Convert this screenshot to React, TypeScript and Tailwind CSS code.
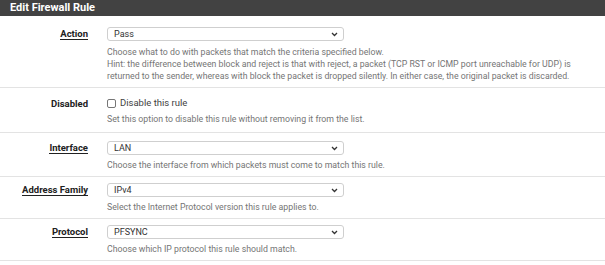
import React from "react";

const font = { fontFamily: "Roboto, 'Noto Sans', sans-serif" };

function Chevron() {
  return (
    <svg width="7" height="5" viewBox="0 0 7 5" className="shrink-0">
      <path d="M1 1 L3.5 3.5 L6 1" fill="none" stroke="#333" strokeWidth="1.3" />
    </svg>
  );
}

function Select({ value }: { value: string }) {
  return (
    <div className="flex h-[14px] w-[237px] items-center justify-between rounded-[3px] border border-[#cfcfcf] bg-white pl-[6px] pr-[5px] text-[9px] text-[#333]">
      <span className="leading-none">{value}</span>
      <Chevron />
    </div>
  );
}

function Label({ text, underline = true }: { text: string; underline?: boolean }) {
  return (
    <div className="flex h-[14px] w-[88px] shrink-0 items-center justify-end text-[9.5px] font-bold text-[#212121]">
      <span className={underline ? "border-b border-[#212121] leading-[11px]" : "leading-[11px]"}>{text}</span>
    </div>
  );
}

function Help({ lines }: { lines: string[] }) {
  return (
    <div className="text-[8.75px] leading-[12px] text-[#757575]">
      {lines.map((l, i) => (
        <div key={i} className="whitespace-nowrap">{l}</div>
      ))}
    </div>
  );
}

export default function App() {
  return (
    <div className="w-[605px] h-[265px] overflow-hidden bg-white" style={font}>
      <div className="h-[16px] bg-[#424242] px-[10px] text-[11px] font-bold leading-[16px] text-white">
        Edit Firewall Rule
      </div>

      <div className="flex items-start border-b border-[#e3e3e3] pt-[11px] pb-[5px]">
        <Label text="Action" />
        <div className="ml-[19px] flex flex-col">
          <Select value="Pass" />
          <div className="mt-[5px]">
            <Help
              lines={[
                "Choose what to do with packets that match the criteria specified below.",
                "Hint: the difference between block and reject is that with reject, a packet (TCP RST or ICMP port unreachable for UDP) is",
                "returned to the sender, whereas with block the packet is dropped silently. In either case, the original packet is discarded.",
              ]}
            />
          </div>
        </div>
      </div>

      <div className="flex items-start border-b border-[#e3e3e3] pt-[8px] pb-[7px]">
        <Label text="Disabled" underline={false} />
        <div className="ml-[19px] flex flex-col">
          <div className="flex h-[14px] items-center gap-[4px] text-[9.5px] text-[#424242]">
            <span className="inline-block h-[9px] w-[9px] rounded-[2px] border border-[#767676] bg-white" />
            <span>Disable this rule</span>
          </div>
          <div className="mt-[3px]">
            <Help lines={["Set this option to disable this rule without removing it from the list."]} />
          </div>
        </div>
      </div>

      <div className="flex items-start border-b border-[#e3e3e3] pt-[8px] pb-[5px]">
        <Label text="Interface" />
        <div className="ml-[19px] flex flex-col">
          <Select value="LAN" />
          <div className="mt-[4px]">
            <Help lines={["Choose the interface from which packets must come to match this rule."]} />
          </div>
        </div>
      </div>

      <div className="flex items-start border-b border-[#e3e3e3] pt-[6px] pb-[5px]">
        <Label text="Address Family" />
        <div className="ml-[19px] flex flex-col">
          <Select value="IPv4" />
          <div className="mt-[4px]">
            <Help lines={["Select the Internet Protocol version this rule applies to."]} />
          </div>
        </div>
      </div>

      <div className="flex items-start border-b border-[#e3e3e3] pt-[6px] pb-[5px]">
        <Label text="Protocol" />
        <div className="ml-[19px] flex flex-col">
          <Select value="PFSYNC" />
          <div className="mt-[4px]">
            <Help lines={["Choose which IP protocol this rule should match."]} />
          </div>
        </div>
      </div>
    </div>
  );
}
